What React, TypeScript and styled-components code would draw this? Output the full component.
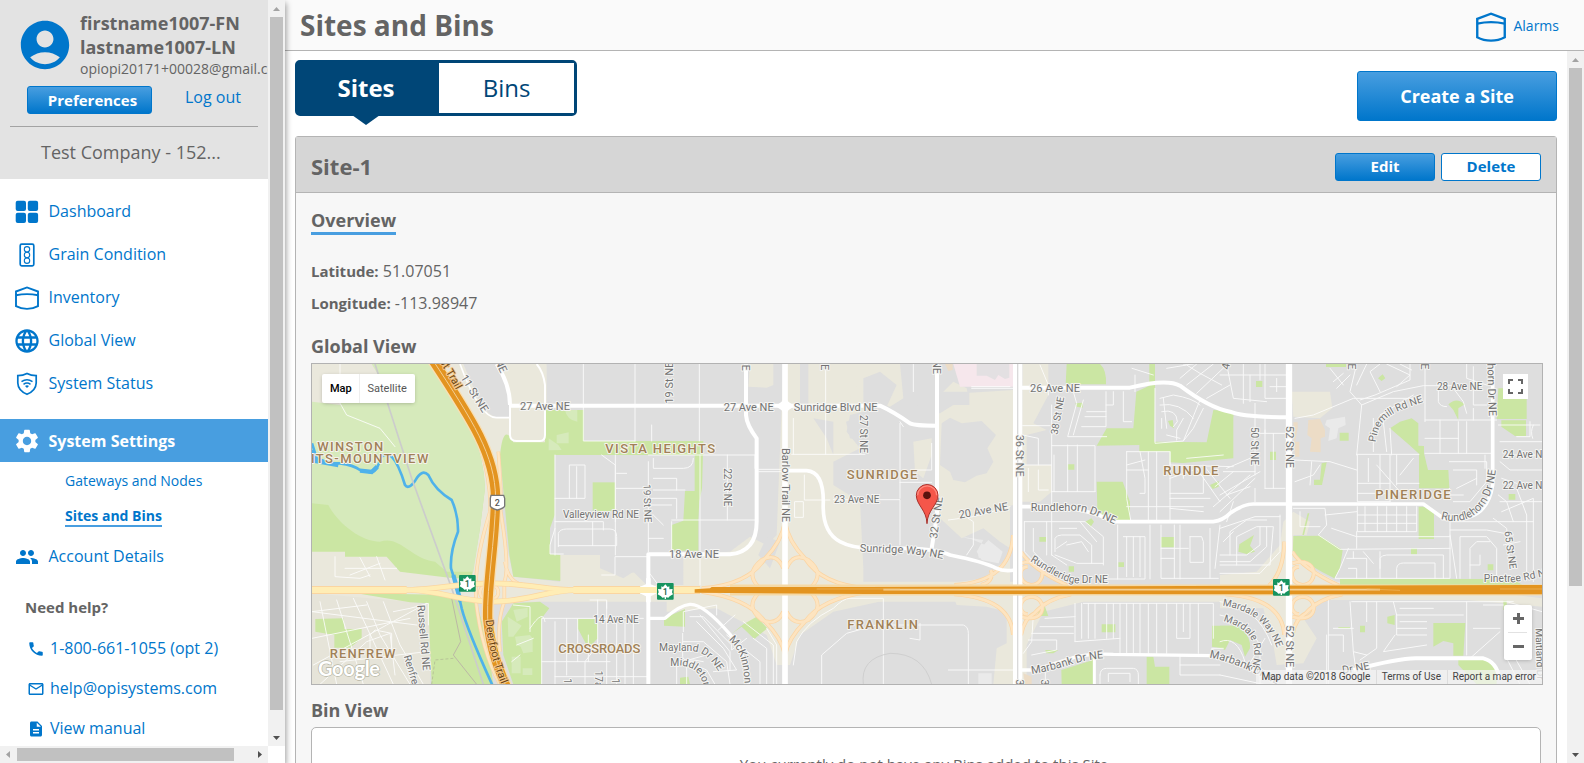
import React from "react";
import styled, { createGlobalStyle, css } from "styled-components";
import {
  MdAccountCircle,
  MdDescription,
  MdLanguage,
  MdMailOutline,
  MdPeople,
  MdPhone,
  MdSettings,
} from "react-icons/md";

const blue = "#0076cb";
const lightBlue = "#489ee0";
const navy = "#004677";
const ink = "#646464";
const line = "#b4b4b4";

const GlobalStyle = createGlobalStyle`
  * { box-sizing: border-box; }
  html, body { margin: 0; height: 100%; overflow: hidden; }
  body { font-family: "Open Sans", "Liberation Sans", sans-serif; color: ${ink}; font-size: 16px; }
`;

const Page = styled.div`
  display: grid;
  grid-template-columns: 285px 1fr;
  width: 1584px;
  height: 763px;
  overflow: hidden;
  background: #fff;
`;

/* ---------- scroll bars ---------- */

const VTrack = styled.div`
  width: 17px;
  flex: none;
  display: flex;
  flex-direction: column;
  align-items: center;
  background: #f1f1f1;
`;

const VThumb = styled.div<{ $size: number }>`
  width: 13px;
  height: ${(p) => p.$size}px;
  background: #c1c1c1;
`;

const HTrack = styled.div`
  width: 268px;
  height: 17px;
  display: flex;
  align-items: center;
  background: #f1f1f1;
`;

const HThumb = styled.div`
  width: 217px;
  height: 13px;
  margin-right: auto;
  background: #c1c1c1;
`;

const ArrowBox = styled.svg`
  display: block;
  width: 17px;
  height: 17px;
  flex: none;
`;

const PushDown = styled.div`
  margin-top: auto;
`;

type Dir = "up" | "down" | "left" | "right";
const arrowPaths: Record<Dir, string> = {
  up: "M5 11 L8.5 7 L12 11Z",
  down: "M5 7 L8.5 11 L12 7Z",
  left: "M10 5 L6 8.5 L10 12Z",
  right: "M7 5 L11 8.5 L7 12Z",
};
const Arrow = ({ dir, muted }: { dir: Dir; muted?: boolean }) => (
  <ArrowBox viewBox="0 0 17 17">
    <path d={arrowPaths[dir]} fill={muted ? "#a3a3a3" : "#505050"} />
  </ArrowBox>
);

/* ---------- side bar ---------- */

const Sidebar = styled.aside`
  position: relative;
  z-index: 2;
  width: 285px;
  height: 763px;
  display: flex;
  flex-direction: column;
  background: #fff;
  box-shadow: 1px 3px 6px rgba(0, 0, 0, 0.4);
`;

const SideRow = styled.div`
  display: flex;
  height: 746px;
`;

const SideContent = styled.div`
  width: 268px;
  height: 746px;
  overflow: hidden;
`;

const Profile = styled.header`
  height: 179px;
  background: #e3e3e3;
  white-space: nowrap;
  overflow: hidden;
`;

const Identity = styled.div`
  display: flex;
  height: 84px;
  padding: 11px 0 0 16px;
  svg { flex: none; margin: 5px 6px 0 0; color: ${blue}; }
`;

const UserName = styled.div`
  font-size: 18px;
  font-weight: 700;
  line-height: 24px;
`;

const Email = styled.div`
  font-size: 14px;
  line-height: 20px;
`;

const Actions = styled.div`
  display: flex;
  height: 42px;
  padding: 2px 0 0 27px;
`;

const buttonFill = css`
  color: #fff;
  background: linear-gradient(${lightBlue}, ${blue});
`;

const Button = styled.button<{ $w: number; $h: number; $size?: number; $outline?: boolean; $shift?: number }>`
  width: ${(p) => p.$w}px;
  height: ${(p) => p.$h}px;
  padding: 0 0 1px ${(p) => p.$shift ?? 0}px;
  border: 1px solid ${blue};
  border-radius: 3px;
  font: 700 ${(p) => p.$size ?? 15}px "Open Sans", sans-serif;
  ${(p) => (p.$outline ? css`color: ${blue}; background: #fff;` : buttonFill)}
`;

const LogOut = styled.a`
  margin-left: 33px;
  line-height: 23px;
  color: ${blue};
`;

const Company = styled.div`
  margin: 0 10px;
  padding: 11px 0 0 31px;
  border-top: 1px solid #a3a3a3;
  font-size: 18px;
  line-height: 28px;
`;

const Nav = styled.nav`
  padding-top: 11px;
`;

const NavItem = styled.a<{ $active?: boolean }>`
  display: flex;
  align-items: center;
  height: 43px;
  padding-left: 15px;
  margin-top: ${(p) => (p.$active ? 14 : 0)}px;
  gap: 9.5px;
  color: ${(p) => (p.$active ? "#fff" : blue)};
  background: ${(p) => (p.$active ? lightBlue : "transparent")};
  font-weight: ${(p) => (p.$active ? 700 : 400)};
  svg { flex: none; }
  span { line-height: 24px; padding: ${(p) => (p.$active ? "1px 0 0" : "0 0 1px")}; }
`;

const SubNav = styled.div`
  height: 73px;
  padding: 8px 0 0 65px;
`;

const SubItem = styled.a<{ $active?: boolean }>`
  display: block;
  width: max-content;
  height: ${(p) => (p.$active ? 22 : 35)}px;
  font-size: 14px;
  line-height: 21px;
  color: ${blue};
  font-weight: ${(p) => (p.$active ? 700 : 400)};
  border-bottom: ${(p) => (p.$active ? `2px solid ${lightBlue}` : "0")};
`;

const Help = styled.section`
  padding: 15px 0 0 25px;
`;

const HelpTitle = styled.div`
  height: 35px;
  font-size: 15px;
  font-weight: 700;
  line-height: 28px;
`;

const HelpLink = styled.a`
  display: flex;
  align-items: center;
  height: 40px;
  padding-left: 2px;
  gap: 5px;
  color: ${blue};
  svg { flex: none; margin-top: 2px; }
`;

/* ---------- main column ---------- */

const Main = styled.main`
  display: flex;
  flex-direction: column;
  height: 763px;
  overflow: hidden;
`;

const TopBar = styled.header`
  display: flex;
  justify-content: space-between;
  height: 51px;
  flex: none;
  padding: 0 25px 0 15px;
  background: #fafafa;
  border-bottom: 1px solid ${line};
`;

const Title = styled.h1`
  margin: 0;
  font-size: 28px;
  line-height: 50px;
  font-weight: 700;
`;

const Alarms = styled.a`
  display: flex;
  align-items: center;
  gap: 7px;
  padding-top: 4px;
  color: ${blue};
  font-size: 14px;
  span { padding-bottom: 4px; }
`;

const ScrollRow = styled.div`
  display: flex;
  flex: 1;
  min-height: 0;
`;

const Content = styled.div`
  width: 1282px;
  padding: 9px 10px 0;
  overflow: hidden;
`;

const Toolbar = styled.div`
  display: flex;
  justify-content: space-between;
  height: 76px;
  button { margin-top: 11px; }
`;

const Tabs = styled.div`
  display: flex;
  width: 282px;
  height: 56px;
  border: 3px solid ${navy};
  border-radius: 5px;
  background: #fff;
`;

const Tab = styled.div<{ $active?: boolean }>`
  position: relative;
  width: ${(p) => (p.$active ? 141 : 135)}px;
  padding-right: ${(p) => (p.$active ? 5 : 0)}px;
  line-height: 49px;
  text-align: center;
  font-size: 24px;
  font-weight: ${(p) => (p.$active ? 700 : 400)};
  color: ${(p) => (p.$active ? "#fff" : navy)};
  background: ${(p) => (p.$active ? navy : "#fff")};
`;

const Pointer = styled.i`
  position: absolute;
  left: 54px;
  top: 52px;
  border: solid transparent;
  border-width: 10px 14px 0;
  border-top-color: ${navy};
`;

const Panel = styled.section`
  height: 900px;
  border: 1px solid ${line};
  border-radius: 3px 3px 0 0;
  background: #f7f7f7;
`;

const PanelHead = styled.header`
  display: flex;
  align-items: center;
  height: 56px;
  padding: 4px 15px 0;
  gap: 6px;
  background: #d6d6d6;
  border-bottom: 1px solid ${line};
`;

const SiteName = styled.h2`
  margin: 0 auto 0 0;
  padding-bottom: 2px;
  font-size: 22px;
  line-height: 28px;
  font-weight: 700;
`;

const PanelBody = styled.div`
  padding: 15px 14px 0 15px;
`;

const SectionTitle = styled.h3<{ $underlined?: boolean; $top?: number }>`
  width: max-content;
  margin: ${(p) => (p.$underlined ? "0 0 20px" : `${p.$top ?? 15}px 0 5px`)};
  ${(p) => p.$underlined && `border-bottom: 3px solid ${lightBlue};`}
  font-size: 18px;
  font-weight: 700;
  line-height: 24px;
`;

const Fact = styled.div`
  height: 32px;
  line-height: 32px;
  b { font-size: 15px; font-weight: 700; }
`;

const BinBox = styled.div`
  width: 1230px;
  height: 120px;
  padding-top: 24px;
  border: 1px solid ${line};
  border-radius: 5px;
  background: #fff;
  text-align: center;
  font-size: 15px;
  line-height: 24px;
`;

/* ---------- map ---------- */

const MapFrame = styled.div`
  position: relative;
  width: 1232px;
  height: 322px;
  border: 1px solid #b2b2b2;
  overflow: hidden;
  font-family: Roboto, sans-serif;
`;

const MapCanvas = styled.svg`
  display: block;
  width: 1230px;
  height: 320px;
`;

const MapTypes = styled.div`
  position: absolute;
  left: 10px;
  top: 10px;
  display: flex;
  height: 29px;
  border-radius: 2px;
  background: #fff;
  box-shadow: 0 1px 4px -1px rgba(0, 0, 0, 0.3);
`;

const MapType = styled.div<{ $on?: boolean }>`
  width: ${(p) => (p.$on ? 37 : 56)}px;
  padding-left: ${(p) => (p.$on ? 8 : 7.5)}px;
  font-size: 11px;
  line-height: 29px;
  color: ${(p) => (p.$on ? "#000" : "#565656")};
  font-weight: ${(p) => (p.$on ? 500 : 400)};
  border-left: ${(p) => (p.$on ? 0 : "1px solid #eee")};
`;

const FullScreen = styled.div`
  position: absolute;
  right: 14px;
  top: 10px;
  width: 25px;
  height: 25px;
  background: #fff;
  svg { display: block; }
`;

const ZoomBox = styled.div`
  position: absolute;
  right: 10px;
  bottom: 24px;
  width: 28px;
  height: 55px;
  border-radius: 2px;
  background: #fff;
  box-shadow: 0 1px 4px -1px rgba(0, 0, 0, 0.3);
  svg { display: block; }
`;

const Credits = styled.div`
  position: absolute;
  right: 0;
  bottom: 0;
  display: flex;
  height: 14px;
  background: rgba(245, 245, 245, 0.72);
  font-size: 10px;
  line-height: 14px;
  color: #444;
  span { padding: 0 5.5px; }
  span:last-child { padding-right: 6px; }
  span + span { padding-left: 5px; border-left: 1px solid #ddd; }
`;

const parks = [
  "M735 165H852V258H1210V300H600Q610 200 640 262H735Z",
  "M600 297H764V480L750 520V597L781 600V678L640 665L628 600Z",
  "M878 382H946V468H878Z",
  "M1184 300H1209L1206 400L1198 440L1195 494V587H1115V510L1150 497L1155 408H1184Z",
  "M640 745L720 740L748 760L725 790V988H640L610 900L605 800Z",
  "M46 792L130 790L133 822H185V850L150 878H103V840L46 830Z",
  "M833 792H893V850L865 880L833 820Z",
  "M1092 790L1155 762L1155 815L1092 812Z",
  "M1293 838L1330 808L1370 785L1402 820L1363 852L1325 815Z",
  "M1140 968L1165 965L1170 988H1140Z",
  "M2297 88L2300 27H2400Q2420 45 2418 88Z",
  "M2548 27H2565V92L2563 260L2720 262L2740 165L2800 168V310L2650 324L2608 322V290H2518V270L2390 272L2420 220L2500 220L2509 110L2548 92Z",
  "M2390 380H2468L2490 440V495H2415L2392 460Z",
  "M2326 145L2348 143V158L2330 155Z M2303 328H2323V344H2303Z M2218 546H2238V560H2218Z M2356 500L2374 490L2382 500L2372 515Z M2306 634H2322V650H2306Z M2455 622H2472V636H2455Z M2583 546H2623V577H2583Z M2405 808H2446V832H2405Z",
  "M2604 198L2618 195L2622 220L2610 212Z M2730 390L2756 378V395L2738 402Z",
  "M2284 945L2370 918L2380 905V988H2285Z M2540 905H2560L2565 935H2608V988H2540Z M2736 812H2795L2785 860L2765 880L2736 875Z",
  "M2216 770L2235 755L2245 783H2210Z M2236 885H2275L2260 895H2238Z",
  "M2760 165L2800 178L2790 290L2760 305Z M2868 78H2887V96H2868Z M2910 290H2928V315H2910Z M3119 233H3146V257H3119Z",
  "M3270 220L3300 200L3335 190L3355 205V272L3372 273V295L3384 345L3445 345L3448 400H3357V296L3328 270Z",
  "M3234 70L3248 58L3256 70L3245 78Z M3445 148Q3470 125 3494 148L3475 160V195L3460 165Z M3078 27H3138V36H3078Z",
  "M3595 100H3680V192H3590Z M3604 196H3678V243H3645L3604 215Z",
  "M3356 455H3382L3402 475V552H3356Z M3626 417H3646V434H3626Z M3333 580H3351V598H3333Z M3563 628H3580V646H3563Z",
  "M3065 325L3080 322L3066 390H3042V374H3060Z M3023 475H3028L3012 540H3007Z",
  "M2980 543L3060 542L3128 585L3120 640L3103 670L3065 650L2978 600Z",
  "M3120 672H3640L3670 692H3120Z",
  "M2818 568L2862 540L2850 572L2865 590L2840 597L2815 590Z",
  "M2760 812L2820 812Q2855 850 2850 880L2835 905L2825 870L2790 855L2775 885L2760 878Z",
  "M3400 804H3496L3490 902H3460V865L3430 858L3400 875Z M3475 915H3560L3590 940V988H3530L3475 930Z",
  "M3262 785L3284 780V810L3262 805Z M3180 812H3195V832H3180Z M3610 737H3620V765H3610Z M3115 816H3150V820H3115Z",
];

const beige = [
  "M36 27H740L760 150L735 260L700 300H600L590 430L640 665L780 680V600L900 600V640L970 670L1000 650L1040 690H1150V600L1290 590L1350 545L1400 570L1430 540L1450 27H1680L1700 100L1690 170L1650 180L1640 230L1680 280L1600 320L1600 390L1680 440L1690 640V680H2180V740H36Z",
  "M1350 27H1420V90L1400 98L1345 95Z",
  "M1500 27H1800L1810 130L1770 155L1690 130L1680 80L1650 120L1660 165L1590 190L1500 150Z",
  "M1920 120L1960 80L2000 100L2010 150L1980 190H1950L1920 230L1960 370L1995 380L2070 340L2085 240L2130 210V690H1920L2050 670L2110 620L2130 580L2100 560L2050 520L1985 550L1920 490Z",
  "M2168 27H2245V120L2200 205L2240 225L2180 240V330H2255V410L2220 440H2165Z",
  "M1950 700H2850L2760 740H2350L2230 770L2180 870V988H2080L2090 880L2120 865V770L2060 755L1970 750Z",
  "M1100 720H1830L1600 770L1500 840L1470 930H1430L1400 840L1250 760L1100 770Z",
  "M2975 110L3090 110L3097 160L3060 190L2980 185Z",
  "M2760 660L2870 650L2940 570L2950 500L2980 470L3030 500L3020 540H2980L3000 620L3110 680L3500 700L3726 730V755L3500 735H3070L3010 790L3050 850L3010 925L2930 930L2920 870L2890 760H2760Z",
  "M1840 260L1895 250V300L1870 370L1845 350Z",
  "M1905 120L2140 105V450L1985 490L1915 480Z",
];

const greyBlocks = [
  "M1030 795V988H725V790Z",
  "M765 300H940V600H765Z M946 600H1030L1115 600V660L1040 690V650L965 655V630L930 600Z",
  "M1400 545L1440 560L1410 640L1375 600Z",
  "M1540 190L1600 200V300L1580 250Z",
  "M1925 205L1950 188L1985 205L2045 198L2088 240L2062 280L2080 320L2060 355L2030 362L1995 382L1960 375L1950 350L1920 330Z",
  "M1840 110H2008V150H1960L1920 175H1860Z M1500 27H1525V150H1500Z M1638 200L1665 190L1695 200V260L1650 250Z M1690 70L1740 50L1790 90L1760 155L1690 165Z",
];

const pale =
  "M1985 545L2000 550L2015 553L2105 590L2095 625L2045 615L2030 590L2050 555Z M3080 195L3135 185L3137 210L3115 220L3110 250L3085 258L3090 220L3075 210Z M2035 955H2075V988H2035Z M2033 590L2065 555L2108 590L2096 625L2036 608Z";

const minor = [
  // Renfrew
  "M105 605V665L180 670L210 660 M135 640L290 640 M180 608L210 665 M230 605L255 675 M150 660L240 625",
  "M36 770L200 750 M60 740L110 988 M110 735L190 988 M160 730L280 988 M200 740L240 840L330 988 M250 740L300 870L370 988 M36 850L330 790 M40 930L260 810L380 745 M60 988L200 860L270 835L285 960 M210 890V840L225 825L275 835V900 M280 770L330 760L385 745V810 M36 770L350 810 M120 920L380 890",
  "M120 27V60L95 100L140 180L240 220L285 275",
  "M640 750L690 755V830 M650 870L700 850 M635 920L660 900",
  // Vista Heights
  "M765 300V600 M765 430H855V330H808V430 M765 500H910V525 M775 575V535Q780 522 800 522H930Q950 522 950 545V572H775 M878 500V572 M765 520L750 570V597H790 M830 335V430 M946 300V600 M905 300L946 330V500 M950 355H980 M946 400H1045 M905 660H945V605H1040",
  "M1045 300H1370 M1060 310V340H1150Q1180 340 1180 310 M1060 370H1130V405 M1060 405H1155 M1045 450H1115 M1045 430H1130V490 M1045 320V590 M1115 500V590 M1060 480L1090 510 M1200 300V690 M1282 300V495 M1115 495H1364 M1005 27V258 M1198 27V258 M1055 210V258 M1365 300V340 M1045 550H1090 M850 27V258H1005 M1045 650L1075 690",
  "M1376 343H1450 M1376 350H1450 M1475 298H1695 M1513 360V435H1590 M1480 190V298 M1577 27V298 M1485 440H1510V487H1485Z M1600 434H1800V570 M1800 205V430 M1800 382H1895",
  // Crossroads
  "M725 988V790H1030 M765 800V988 M800 790V960 M833 792V920 M865 840V920 M893 735V870L855 920V988 M920 740V988 M950 790V988 M975 800V988 M1000 800V988 M765 965H1040 M870 735H920V760 M690 820Q730 760 735 800 M725 920H930",
  // Mayland area
  "M1150 830V770L1250 750V780 M1148 835V905Q1148 915 1165 915L1220 900 M1150 860H1210L1280 920L1290 988 M1150 920H1180 M1160 988V920L1220 945L1245 988 M1130 988V930Q1150 905 1210 920 M1190 800L1270 880L1310 945L1240 950 M1200 780L1290 890V945 M1170 785H1210L1295 870V885L1340 850 M1255 825L1305 780 M1330 800L1420 870V988 M1360 850L1400 880V988 M1280 840L1380 920V988 M1400 820L1430 870V988",
  // Sunridge
  "M1840 27V110 M1800 200L1810 215 M1890 25H1920 M1895 265V345H1840 M1990 480L2020 500V570L2000 600 M1945 495L2020 485L2130 455 M2015 100H2140 M2015 95H2130",
  "M1480 930L1490 860Q1520 800 1600 760Q1630 730 1650 730H1750V988 M1565 988V900L1640 835L1730 810H1990Q2005 815 2005 835V988 M1860 805V855L1830 850 M1945 945H2140",
  // Rundle
  "M2168 212H2250 M2168 240L2215 250V330 M2168 330H2255 M2185 340V410 M2215 345V405H2245 M2255 150V600 M2255 410H2385 M2262 300V410 M2303 270V410 M2332 270V410 M2255 272H2385V410 M2220 30L2245 90V120",
  "M2320 110L2330 145L2303 245H2420 M2350 135L2320 240 M2418 110V215H2345 M2360 170H2418 M2355 185H2418 M2418 150H2440V110 M2470 110V200H2495 M2496 40L2560 60 M2505 60V110",
  "M2173 500H2355L2410 545V630 M2173 500V590L2230 650 M2255 600L2300 630 M2200 520V590L2240 630 M2240 500V600 M2265 600L2330 625H2410 M2265 590V550Q2270 540 2285 540H2340L2375 570V625 M2300 570L2345 560L2365 590 M2270 580L2300 560 M2340 500L2390 560 M2278 520H2330",
  "M2453 510V672 M2470 545H2535V672H2410 M2480 545V665 M2500 545V665 M2520 545V665 M2550 510V672 M2583 510V670H2755 M2623 510V670 M2583 580H2665 M2583 610H2623 M2670 545H2705L2710 560V622H2670V545 M2640 510V672 M2730 520V670 M2760 510L2745 640",
  "M2480 290V430L2492 495 M2480 290H2610V330 M2480 330L2535 315 M2520 290L2535 370V415H2520 M2545 290V500 M2570 290V500 M2610 290V500 M2480 345H2545 M2610 330L2800 335 M2610 370L2680 345L2710 365V415H2610 M2610 430H2730 M2610 460L2710 470 M2480 455H2710 M2650 340V370 M2690 340L2760 440 M2710 330L2790 430 M2660 310L2770 300 M2740 455L2850 360 M2745 395L2800 350",
  "M2565 100V265L2650 258L2700 135 M2580 130L2620 120Q2680 130 2700 150 M2580 150Q2640 140 2680 190 M2585 170Q2630 160 2632 200L2620 215 M2585 190V220 M2630 255V225L2650 190 M2600 240L2640 250 M2710 160L2680 220L2650 258 M2730 150L2700 130 M2590 130L2600 220",
  "M2600 40L2660 30L2700 55L2765 90 M2650 30L2680 27 M2640 70L2690 27 M2660 90L2740 27 M2690 115L2780 30 M2720 130L2790 90",
  // Marbank
  "M2325 745V860 M2200 780L2195 860L2170 895 M2235 790L2325 785 M2220 815H2320 M2195 835H2320 M2185 855H2270V885L2195 900 M2350 745H2740V850 M2345 745V850 M2365 745V850 M2385 745V850 M2420 745V850 M2440 745V850 M2460 745V895 M2480 745V895 M2500 745V895 M2520 745V895 M2545 745V895 M2570 745V895 M2600 745V895 M2630 745V850H2670V745 M2650 745V830 M2695 745V895 M2325 860L2460 850 M2735 880H2770 M2400 960V988 M2400 960Q2400 940 2420 940H2500Q2515 942 2515 960V988 M2425 980V955H2490V980 M2640 905V960H2760 M2640 930H2760 M2236 950V988",
  // Pineridge
  "M2780 27L2800 130L2900 140 M2760 60H2960 M2830 27V145 M2850 60V140 M2895 27V130H2960 M2880 27V75 M2910 95H2960 M2930 70V110 M2865 145V360 M2895 225V400 M2920 235V400 M2865 235H2895 M2895 180V235H2955 M2895 400H2955 M2865 350H2770 M2780 340L2850 310 M2865 370L2760 470 M2850 395L2780 420 M2760 420L2880 350 M2800 440L2780 500 M2865 400V440",
  "M2760 520L2865 485H2940 M2790 600V530L2840 495H2900 M2810 630V545L2870 515H2920L2910 630H2760 M2760 600H2840L2880 570V515 M2760 620H2850L2900 575V515 M2760 655H2880L2940 590V480 M2770 560L2800 530",
  "M2985 190L3040 180L3160 130H3340 M3170 27L3150 110L3185 150L3170 300 M3090 40L3130 90 M3130 55L3100 80 M3110 100L3150 60 M2985 315L3090 320L3170 345",
  "M3185 150L3280 110L3370 92H3500 M3200 27L3170 90 M3240 27L3210 50L3240 110 M3260 27L3330 60L3290 95 M3300 27L3335 45 M3330 27V75L3225 120L3180 135 M3375 27V200 M3220 190V290 M3250 200L3260 290 M3240 180L3340 120 M3170 298H3357 M3270 220L3275 300 M3375 195H3590 M3375 295H3580 M3420 195V295 M3475 200V295 M3500 200V295 M3520 195V160 M3375 250H3475 M3415 100V140Q3420 155 3440 155 M3460 100L3490 140L3500 175 M3500 27V70L3560 90 M3520 35V150H3560",
  "M3172 300V440H3270 M3172 385H3270 M3172 415H3260 M3205 310V380 M3240 300V400 M3230 330L3300 410 M3290 300V390 M3270 300V440 M3290 385H3357 M3340 310L3300 360 M3448 400V420H3490 M3448 320H3560V380L3510 440H3460 M3460 345H3530V390 M3470 400L3530 370 M3555 300V340",
  "M3595 210H3720 M3620 300H3726 M3600 260H3726 M3600 320L3630 345H3726 M3605 370L3650 385 M3595 420L3620 440L3640 500 M3605 470L3700 430V680 M3580 490L3620 520L3630 640 M3650 400L3680 480V672 M3600 440H3726 M3690 200V245H3650 M3700 210Q3690 230 3698 250",
  "M2985 380L3040 360L3060 330 M3035 320L3030 390 M2980 460L3075 460L3080 510L3055 540L3120 583L3450 580 M3000 470V515H3060 M3075 480L3170 470 M3172 455V530H3350V455 M3195 455V530 M3232 455V530 M3260 455V530 M3290 455V530 M3320 455V530 M3172 480H3350 M3172 505H3350 M3145 580L3120 640L3105 670H3450V500 M3170 530V580 M3095 520L3170 545H3450 M3450 500H3700",
  "M3140 610H3200V670 M3160 590V610 M3145 640H3170V670 M3240 590V670 M3240 640V610Q3245 600 3260 600H3430V670 M3290 670V640Q3292 624 3310 624H3405V670 M3190 590L3220 625 M3450 525H3560L3640 540 M3480 670V545H3560L3590 580V670 M3510 670V580L3530 560H3570 M3450 540L3470 670 M3540 600V630H3510 M3610 570L3660 560",
  "M3155 740H3640 M3150 740L3160 890L3200 900 M3280 740L3290 780H3490 M3200 740V800 M3230 740V880L3180 915 M3290 780V840H3380 M3290 820H3380 M3300 800H3380 M3285 840L3250 890L3380 870 M3300 760H3400 M3500 740V900 M3520 820H3600 M3550 750H3610 M3085 730V988 M3085 840H3130V890 M3100 820H3160 M3510 910L3600 830 M3620 910L3660 988 M3640 900L3690 988 M3670 790L3650 910 M3620 740L3726 770 M3160 890L3170 960",
  "M2760 780Q2840 790 2880 870V988 M2760 860Q2810 840 2835 920 M2760 960L2900 990 M2895 850L2840 940 M2760 740Q2870 750 2915 870 M2760 900L2840 925 M3080 840V988",
];

const majors: [string, number][] = [
  ["M590 27Q630 90 630 150", 12],
  ["M630 150V240Q630 258 650 258H720Q735 258 735 240V90Q730 50 710 27", 6],
  ["M480 27Q540 190 590 188H630", 5],
  ["M630 152H1740Q1780 170 1830 205Q1845 212 1910 212", 12],
  ["M1338 27V180Q1340 210 1370 250V500Q1370 590 1290 598H1045V988", 12],
  ["M1450 347H1520Q1570 350 1570 440Q1565 530 1620 560Q1660 582 1730 580Q1900 575 1950 600Q2050 620 2090 640Q2110 650 2145 645", 11],
  ["M1911 27V480L1895 580", 12],
  ["M2165 98H2490Q2600 70 2640 92Q2730 160 2790 170Q2830 187 2970 187", 12],
  ["M2165 455H2240Q2370 460 2440 500H2740Q2770 495 2790 475Q2830 447 2860 447H3370L3430 490Q3560 510 3578 390V27", 11],
  ["M1045 790H1095Q1140 750 1170 748Q1210 745 1290 838Q1340 900 1345 988", 10],
  ["M2165 945H2200L2330 905Q2370 895 2440 898L2740 902Q2830 920 2900 970", 10],
  ["M3160 945Q3310 905 3360 910H3550Q3590 920 3598 970", 12],
  ["M2383 910V988", 9],
  ["M1455 27V988", 17],
  ["M2153 27V988", 28],
  ["M2967 27V988", 19],
];

const clover = (x: number) =>
  [
    `M${x} 500Q${x - 10} 560 ${x - 60} 610Q${x - 110} 690 ${x - 250} 700`,
    `M${x} 500Q${x + 10} 560 ${x + 60} 610Q${x + 110} 690 ${x + 250} 700`,
    `M${x} 900Q${x - 10} 850 ${x - 60} 800Q${x - 110} 730 ${x - 250} 710`,
    `M${x} 900Q${x + 10} 850 ${x + 60} 800Q${x + 110} 730 ${x + 250} 710`,
    `M${x - 5} 640Q${x - 25} 590 ${x - 70} 615Q${x - 120} 655 ${x - 80} 695`,
    `M${x + 5} 640Q${x + 25} 590 ${x + 70} 615Q${x + 120} 655 ${x + 80} 695`,
    `M${x - 5} 770Q${x - 25} 815 ${x - 70} 795Q${x - 120} 755 ${x - 80} 715`,
    `M${x + 5} 770Q${x + 25} 815 ${x + 70} 795Q${x + 120} 755 ${x + 80} 715`,
  ].join(" ");

const smallClover = (x: number, withWest: boolean) =>
  [
    `M${x + 10} 590Q${x + 40} 640 ${x + 150} 692`,
    `M${x + 10} 625C${x + 90} 600 ${x + 90} 690 ${x + 40} 690C${x} 685 ${x} 635 ${x + 30} 635`,
    `M${x + 10} 785C${x + 90} 810 ${x + 90} 725 ${x + 40} 725C${x} 730 ${x} 775 ${x + 30} 778`,
    `M${x + 10} 840Q${x + 20} 790 ${x + 50} 775Q${x + 90} 730 ${x + 160} 718`,
    withWest ? `M${x - 14} 540Q${x - 20} 680 ${x - 190} 690` : `M${x - 14} 560Q${x - 16} 650 ${x - 60} 692`,
    `M${x - 14} 840Q${x - 20} 730 ${x - 190} 718`,
    withWest ? `M${x - 80} 645Q${x - 70} 680 ${x - 110} 690` : "",
  ].join(" ");

type Label = { t: string; x: number; y: number; r?: number; a?: "start" | "middle" | "end"; s?: number };

const areas: (Label & { w: number })[] = [
  { t: "WINSTON", x: 52, y: 273, w: 198 },
  { t: "HTS-MOUNTVIEW", x: 16, y: 311, w: 369 },
  { t: "RENFREW", x: 89, y: 896, w: 197 },
  { t: "VISTA HEIGHTS", x: 916, y: 279, w: 329 },
  { t: "CROSSROADS", x: 775, y: 879, w: 246 },
  { t: "SUNRIDGE", x: 1640, y: 357, w: 212 },
  { t: "FRANKLIN", x: 1642, y: 809, w: 212 },
  { t: "RUNDLE", x: 2590, y: 346, w: 165 },
  { t: "PINERIDGE", x: 3226, y: 419, w: 226 },
];

const streets: Label[] = [
  { t: "27 Ave NE", x: 735, y: 153 },
  { t: "27 Ave NE", x: 1346, y: 157 },
  { t: "Sunridge Blvd NE", x: 1607, y: 155 },
  { t: "18 Ave NE", x: 1182, y: 598 },
  { t: "23 Ave NE", x: 1670, y: 434, s: 30 },
  { t: "Valleyview Rd NE", x: 903, y: 477, s: 30 },
  { t: "14 Ave NE", x: 948, y: 792, s: 30 },
  { t: "26 Ave NE", x: 2265, y: 99 },
  { t: "28 Ave NE", x: 3479, y: 95, s: 30 },
  { t: "24 Ave NE", x: 3608, y: 299, s: 30, a: "start" },
  { t: "22 Ave NE", x: 3608, y: 391, s: 30, a: "start" },
  { t: "19 St NE", x: 1043, y: 445, r: 88, s: 30 },
  { t: "22 St NE", x: 1282, y: 397, r: 90, s: 30 },
  { t: "27 St NE", x: 1692, y: 237, r: 90, s: 30 },
  { t: "Barlow Trail NE", x: 1458, y: 390, r: 90 },
  { t: "36 St NE", x: 2160, y: 302, r: 90 },
  { t: "50 St NE", x: 2864, y: 273, r: 90, s: 30 },
  { t: "52 St NE", x: 2969, y: 276, r: 90 },
  { t: "52 St NE", x: 2969, y: 874, r: 90 },
  { t: "65 St NE", x: 3632, y: 585, r: 82, s: 30 },
  { t: "Rundlehorn Dr NE", x: 3579, y: 183, r: 88, a: "end" },
  { t: "Maitland Dr", x: 3717, y: 820, r: 88, s: 30, a: "start" },
  { t: "19 St NE", x: 1106, y: 83, r: -90 },
  { t: "NE", x: 1911, y: 36, r: 90 },
  { t: "NE", x: 604, y: 32, r: 65 },
  { t: "E", x: 1338, y: 38, r: 90 },
  { t: "E", x: 1576, y: 36, r: 90 },
  { t: "E", x: 3156, y: 34, r: 90 },
  { t: "E", x: 3376, y: 34, r: 90 },
  { t: "4", x: 2777, y: 34, r: -80 },
  { t: "3", x: 2160, y: 982, r: 90 },
  { t: "3", x: 2236, y: 982, r: 90 },
  { t: "1", x: 802, y: 978, r: 90, s: 30 },
  { t: "17a", x: 897, y: 972, r: 90, s: 30 },
  { t: "1", x: 948, y: 978, r: 90, s: 30 },
  { t: "38 St NE", x: 2272, y: 182, r: -80, s: 30 },
  { t: "32 St NE", x: 1908, y: 488, r: -82 },
  { t: "20 Ave NE", x: 2050, y: 466, r: -10 },
  { t: "11 St NE", x: 524, y: 115, r: 58 },
  { t: "Russell Rd NE", x: 372, y: 848, r: 85, s: 32 },
  { t: "Renfrew", x: 338, y: 955, r: 74, s: 31 },
];

const curved: { t: string; d: string; s?: number; hw?: boolean }[] = [
  { t: "Rundlehorn Dr NE", d: "M2192 467H2320C2370 468 2400 490 2460 515" },
  { t: "Sunridge Way NE", d: "M1679 590L1800 594Q1880 600 1960 618" },
  { t: "Rundleridge Dr NE", d: "M2190 618C2250 655 2300 690 2350 685H2470", s: 31 },
  { t: "Marbank Dr NE", d: "M2195 957C2260 948 2300 930 2345 920Q2380 910 2450 908" },
  { t: "Rundlehorn Dr NE", d: "M3422 492C3520 520 3590 450 3590 300", s: 33 },
  { t: "Pinemill Rd NE", d: "M3227 262C3235 190 3270 170 3400 132", s: 31 },
  { t: "Mardale Way NE", d: "M2767 752C2850 765 2905 800 2935 890", s: 30 },
  { t: "Mardale Rd NE", d: "M2770 798C2845 820 2885 860 2850 950", s: 30 },
  { t: "Marbank Dr NE", d: "M2728 908Q2810 920 2960 1005" },
  { t: "Mayland Dr NE", d: "M1077 888H1170C1205 888 1230 905 1265 965", s: 31 },
  { t: "Middleton Dr", d: "M1111 932H1140C1190 935 1220 960 1218 1080", s: 31 },
  { t: "McKinnon Dr", d: "M1286 854C1325 890 1338 930 1333 1070", s: 32 },
  { t: "Pinetree Rd NE", d: "M3551 682H3640Q3680 675 3780 655", s: 31 },
  { t: "Dr NE", d: "M3128 956Q3170 952 3230 938" },
  { t: "Deerfoot Trail", d: "M358 -60Q430 20 505 180", hw: true },
  { t: "Deerfoot Trail", d: "M557 795Q565 910 630 1050", hw: true },
];

const Shield = ({ x, y }: { x: number; y: number }) => (
  <g transform={`translate(${x} ${y})`}>
    <rect x="-25" y="-25" width="50" height="50" rx="3" fill="#16935f" />
    <path
      d="M0-21L7-13L12-15L12-6L22-7L20 3L23 9L13 15L9 19L2 18V23H-2V18L-9 19L-13 15L-23 9L-20 3L-22-7L-12-6L-12-15L-7-13Z"
      fill="#fff"
    />
    <text y="11" textAnchor="middle" fontSize="27" fontWeight="500" fill="#186347">1</text>
  </g>
);

const highwayTwo = "M395 10C520 200 585 300 587 430C585 560 560 690 563 790C572 880 590 930 625 1010";
const trunk = "M36 705H330C430 700 480 685 580 685S740 705 830 705H1200 M36 705H330C430 708 480 740 580 740S740 706 830 705";
const ramps =
  "M540 270Q575 390 570 470Q530 600 528 680V740Q545 890 600 988 M595 290Q605 420 602 470Q630 640 613 680V740Q590 800 600 890 M540 712C540 680 595 680 595 712C595 742 540 742 540 712Z M615 620Q625 690 680 690";

const CityMap = () => (
  <MapFrame>
    <MapCanvas viewBox="36 27 3690 960" fontFamily="Roboto, sans-serif">
      <rect x="36" y="27" width="3690" height="960" fill="#dedede" />
      <g fill="#eae8dc">{beige.map((d) => <path key={d} d={d} />)}</g>
      <path d="M490 27H590Q630 80 628 188H590Q545 170 530 120Z M740 27H1340V258H852L850 150H740Z" fill="#dedede" />
      <g fill="#dedede">{greyBlocks.map((d) => <path key={d} d={d} />)}</g>
      <path d="M36 715L330 740L390 750V988H36Z" fill="#e6e4d9" />
      <path d="M1960 27H2140V95H1980Z" fill="#f6e7ec" />
      <path d="M2030 27H2128V68L2115 72L2095 60L2085 75L2060 62H2030Z" fill="#e3e0e2" />
      <path d="M36 27H405Q550 230 555 400L540 520L515 670H460L300 650L260 605L135 605V590H36Z" fill="#cbe6a3" />
      <path d="M36 27H405Q550 230 555 400L540 520L520 650H440L405 620C330 610 300 540 240 560C180 560 110 500 85 450L36 445Z" fill="#d6eabb" />
      <path d="M36 27H215L235 60L125 90L120 150L36 140Z" fill="#eae8dc" />
      <path d="M170 715L460 720L530 745L560 850L580 988H395L385 745L330 742Z" fill="#cbe6a3" />
      <g fill="#cbe6a3">{parks.map((d) => <path key={d} d={d} />)}</g>
      <path
        d="M770 240L806 232V265H770Z M746 250L775 270L785 285L746 286Z M795 165H832V200Q800 195 795 165Z M640 765L683 758V785L650 800Z M623 785L665 812L640 845H625Z M660 870L700 890L670 895Z M635 905H662V955H635Z M668 940H697V960H668Z M645 845L690 840L698 850V890L650 870Z"
        fill="#d6eabb"
      />
      <path d="M3025 195L3060 192L3075 225V245L3062 250V292L3030 290L3035 250L3022 240Z M2980 202H2993V220L2985 260H2998V305H2985Z M1935 27H1958V45L1945 48Z M2170 955L2195 965V988H2175Z" fill="#ecdcc6" />
      <path d={pale} fill="#eaeaea" />
      <g fill="none" stroke="#fff" strokeLinecap="round" strokeLinejoin="round">
        <g strokeWidth="3" opacity=".82">{minor.map((d) => <path key={d} d={d} />)}</g>
      </g>
      <path
        d="M36 265L50 310L90 325H120Q160 330 180 345L215 352Q235 345 240 310Q255 290 275 305Q295 325 315 390Q325 405 345 378Q365 340 385 360Q405 405 455 435Q475 480 474 530Q450 590 453 640Q470 690 485 760Q500 820 577 990"
        fill="none"
        stroke="#4fb2ea"
        strokeWidth="8"
        strokeLinejoin="round"
      />
      <path d="M36 285L48 318L115 330 M180 347L215 351L232 335" fill="none" stroke="#4fb2ea" strokeWidth="13" />
      <path d="M460 660L482 740" stroke="#4fb2ea" strokeWidth="13" />
      <path d="M225 27L335 370L455 700L550 988" fill="none" stroke="#ccc" strokeWidth="5" />
      <path d="M455 730L482 860L460 900L530 988" fill="none" stroke="#bcb8a6" strokeWidth="3" />
      <path d="M395 988L405 915L460 910" fill="none" stroke="#b8c598" strokeWidth="3" strokeDasharray="9 6" />
      <path d="M1690 988Q1680 910 1770 895Q1870 895 1895 988" fill="none" stroke="#cfcfcf" strokeWidth="3" />

      <path d={ramps} fill="none" stroke="#fbd4a2" strokeWidth="11" />
      <path d={ramps} fill="none" stroke="#fde6c4" strokeWidth="7" />
      <path d={clover(1455)} fill="none" stroke="#fbd4a2" strokeWidth="12" />
      <path d={clover(1455)} fill="none" stroke="#fde4c0" strokeWidth="8" />
      <path d={smallClover(2153, true) + smallClover(2967, false)} fill="none" stroke="#fbd4a2" strokeWidth="12" />
      <path d={smallClover(2153, true) + smallClover(2967, false)} fill="none" stroke="#fde4c0" strokeWidth="8" />
      <g fill="none" stroke="#fff" strokeLinejoin="round">
        {majors.map(([d, w]) => <path key={d} d={d} strokeWidth={w} />)}
      </g>
      <path d="M2153 27V988" stroke="#d9d9d9" strokeWidth="4" />
      <path d="M1455 130L1465 143L1480 153L1465 163L1455 176L1445 163L1430 153L1445 143Z" fill="#fff" stroke="#fff" strokeWidth="4" />
      <path d="M1038 670V688L1018 696H1072L1052 688V670Z M1038 742V724L1018 714H1072L1052 724V742Z" fill="#fff" />

      <g fill="none" stroke="#fbd5a0">
        <path d={trunk} strokeWidth="17" />
        <path d="M36 705H320 M820 705H1020 M1070 705H1200" strokeWidth="24" />
      </g>
      <g fill="none" stroke="#ffedb5">
        <path d={trunk} strokeWidth="13" />
        <path d="M36 705H320 M820 705H1200" strokeWidth="18" />
      </g>

      <path d="M1290 705H3726" stroke="#f5d9a6" strokeWidth="33" />
      <path d="M1184 703L1230 700L1235 696H1700L3726 690V718L1700 717L1184 713Z" fill="#e39420" />
      <path d="M1750 704H3240" stroke="#f4cf94" strokeWidth="5" fill="none" />
      <path d="M1550 702H1800 M3200 702L3300 706 M3600 702H3726" stroke="#edba68" strokeWidth="2" />
      <path d={highwayTwo} fill="none" stroke="#f8dfb4" strokeWidth="36" />
      <path d={highwayTwo} fill="none" stroke="#e39420" strokeWidth="28" />
      <path d={highwayTwo} fill="none" stroke="#f4cf94" strokeWidth="3" />

      <g fill="#737373" stroke="#f4f4f2" strokeWidth="6" strokeLinejoin="round" paintOrder="stroke">
        {streets.map((l) => (
          <text
            key={`${l.t}${l.x}${l.y}`}
            transform={`translate(${l.x} ${l.y}) rotate(${l.r ?? 0})`}
            dy=".36em"
            textAnchor={l.a ?? "middle"}
            fontSize={l.s ?? 33}
          >
            {l.t}
          </text>
        ))}
        {curved.map((l, i) => (
          <g key={l.d}>
            <path id={`street-${i}`} d={l.d} fill="none" stroke="none" />
            <text fontSize={l.s ?? 33} {...(l.hw ? { fill: "#6b4310", stroke: "#f3c88a" } : {})}>
              <textPath href={`#street-${i}`}>{l.t}</textPath>
            </text>
          </g>
        ))}
      </g>
      <g fill="#a08158" stroke="#f6f3ec" strokeWidth="6" strokeLinejoin="round" paintOrder="stroke" fontSize="39" fontWeight="500">
        {areas.map((l) => (
          <text key={l.t} x={l.x} y={l.y} dy=".36em" textLength={l.w}>{l.t}</text>
        ))}
      </g>

      <path d="M573 421H611L614 430V453Q612 460 592 465Q573 460 571 453V430Z" fill="#fff" stroke="#777" strokeWidth="4" />
      <text x="592" y="453" fontSize="27" fontWeight="500" textAnchor="middle" fill="#555">2</text>
      <Shield x={502} y={685} />
      <Shield x={1096} y={709} />
      <Shield x={2944} y={697} />
      <path
        d="M1881 506C1880 465 1849 450 1849 421A32.500 32.500 0 0 1 1914 421C1914 450 1882 465 1881 506Z"
        fill="#f5564a"
        stroke="#a8302a"
        strokeWidth="3"
      />
      <path d="M1853 421A28 28 0 0 1 1910 421" fill="none" stroke="#ff8a7e" strokeWidth="4" />
      <circle cx="1881" cy="421" r="11.500" fill="#5a120e" />
      <text
        x="54"
        y="963"
        fontFamily="Lato, sans-serif"
        fontSize="60"
        fontWeight="700"
        textLength="186"
        fill="#fff"
        stroke="#b5b5a5"
        strokeWidth="4"
        paintOrder="stroke"
      >
        Google
      </text>
    </MapCanvas>
    <MapTypes>
      <MapType $on>Map</MapType>
      <MapType>Satellite</MapType>
    </MapTypes>
    <FullScreen>
      <svg width="25" height="25" viewBox="0 0 25 25" fill="none" stroke="#666" strokeWidth="2">
        <path d="M6 10V6H10 M15 6H19V10 M19 15V19H15 M10 19H6V15" />
      </svg>
    </FullScreen>
    <ZoomBox>
      <svg width="28" height="55" viewBox="0 0 28 55">
        <path d="M9 13.500H20 M14.500 8V19 M9 41.500H20" stroke="#666" strokeWidth="3" />
        <path d="M4 27.500H23" stroke="#e2e2e2" />
      </svg>
    </ZoomBox>
    <Credits>
      <span>Map data ©2018 Google</span>
      <span>Terms of Use</span>
      <span>Report a map error</span>
    </Credits>
  </MapFrame>
);

/* ---------- icons ---------- */

const DashboardIcon = () => (
  <svg width="24" height="24" viewBox="0 0 24 24" fill={blue}>
    <rect x=".7" y=".7" width="10.300" height="10.300" rx="2" />
    <rect x="12.800" y=".7" width="10.300" height="10.300" rx="2" />
    <rect x=".7" y="12.700" width="10.300" height="10.300" rx="2" />
    <rect x="12.800" y="12.700" width="10.300" height="10.300" rx="2" />
  </svg>
);

const GrainIcon = () => (
  <svg width="24" height="24" viewBox="0 0 24 24" fill="none" stroke={blue}>
    <rect x="5.200" y="1.200" width="13.600" height="21.600" rx="1.500" strokeWidth="1.700" />
    <circle cx="12" cy="6.300" r="2.700" strokeWidth="1.100" />
    <circle cx="12" cy="12" r="2.700" strokeWidth="1.100" />
    <circle cx="12" cy="17.700" r="2.700" strokeWidth="1.100" />
  </svg>
);

const BinIcon = ({ size = 24 }: { size?: number }) => (
  <svg width={size} height={size} viewBox="0 0 24 24" fill="none" stroke={blue} strokeWidth="1.900">
    <path d="M1 5.500L12 1.400L23 5.500V20.200Q18 22.900 12 22.900T1 20.200Z" />
    <path d="M1 9.300Q12 6.900 23 9.300" />
  </svg>
);

const StatusIcon = () => (
  <svg width="24" height="24" viewBox="0 0 24 24" fill="none" stroke={blue} strokeWidth="1.700">
    <path d="M12 1.500Q16 3.600 21.200 3.700V11Q21 18.500 12 22.300Q3 18.500 2.800 11V3.700Q8 3.600 12 1.500Z" />
    <path d="M6.500 9.700Q12 5.700 17.500 9.700 M8.500 12.300Q12 9.700 15.500 12.300" strokeWidth="1.500" />
    <path d="M10 13.900Q12 12.800 14 13.900L12 16Z" fill={blue} stroke="none" />
  </svg>
);

const GlobeIcon = styled(MdLanguage)`
  margin: 0 -2px;
`;

const GearIcon = styled(MdSettings)`
  margin: 0 -2px;
`;

const App = () => (
  <Page>
    <GlobalStyle />
    <Sidebar>
      <SideRow>
        <SideContent>
          <Profile>
            <Identity>
              <MdAccountCircle size={58} />
              <div>
                <UserName>firstname1007-FN</UserName>
                <UserName>lastname1007-LN</UserName>
                <Email>opiopi20171+00028@gmail.com</Email>
              </div>
            </Identity>
            <Actions>
              <Button $w={125} $h={28} $shift={6}>Preferences</Button>
              <LogOut>Log out</LogOut>
            </Actions>
            <Company>Test Company - 152...</Company>
          </Profile>
          <Nav>
            <NavItem><DashboardIcon /><span>Dashboard</span></NavItem>
            <NavItem><GrainIcon /><span>Grain Condition</span></NavItem>
            <NavItem><BinIcon /><span>Inventory</span></NavItem>
            <NavItem><GlobeIcon size={28} /><span>Global View</span></NavItem>
            <NavItem><StatusIcon /><span>System Status</span></NavItem>
            <NavItem $active><GearIcon size={28} /><span>System Settings</span></NavItem>
            <SubNav>
              <SubItem>Gateways and Nodes</SubItem>
              <SubItem $active>Sites and Bins</SubItem>
            </SubNav>
            <NavItem><MdPeople size={24} /><span>Account Details</span></NavItem>
          </Nav>
          <Help>
            <HelpTitle>Need help?</HelpTitle>
            <HelpLink><MdPhone size={18} />1-800-661-1055 (opt 2)</HelpLink>
            <HelpLink><MdMailOutline size={18} />help@opisystems.com</HelpLink>
            <HelpLink><MdDescription size={18} />View manual</HelpLink>
          </Help>
        </SideContent>
        <VTrack>
          <Arrow dir="up" muted />
          <VThumb $size={693} />
          <PushDown><Arrow dir="down" /></PushDown>
        </VTrack>
      </SideRow>
      <HTrack>
        <Arrow dir="left" muted />
        <HThumb />
        <Arrow dir="right" />
      </HTrack>
    </Sidebar>
    <Main>
      <TopBar>
        <Title>Sites and Bins</Title>
        <Alarms><BinIcon size={30} /><span>Alarms</span></Alarms>
      </TopBar>
      <ScrollRow>
        <Content>
          <Toolbar>
            <Tabs>
              <Tab $active>Sites<Pointer /></Tab>
              <Tab>Bins</Tab>
            </Tabs>
            <Button $w={200} $h={50} $size={18}>Create a Site</Button>
          </Toolbar>
          <Panel>
            <PanelHead>
              <SiteName>Site-1</SiteName>
              <Button $w={100} $h={28}>Edit</Button>
              <Button $w={100} $h={28} $outline>Delete</Button>
            </PanelHead>
            <PanelBody>
              <SectionTitle $underlined>Overview</SectionTitle>
              <Fact><b>Latitude:</b> 51.07051</Fact>
              <Fact><b>Longitude:</b> -113.98947</Fact>
              <SectionTitle>Global View</SectionTitle>
              <CityMap />
              <SectionTitle $top={13}>Bin View</SectionTitle>
              <BinBox>You currently do not have any Bins added to this Site.</BinBox>
            </PanelBody>
          </Panel>
        </Content>
        <VTrack>
          <Arrow dir="up" muted />
          <VThumb $size={518} />
          <PushDown><Arrow dir="down" /></PushDown>
        </VTrack>
      </ScrollRow>
    </Main>
  </Page>
);

export default App;
